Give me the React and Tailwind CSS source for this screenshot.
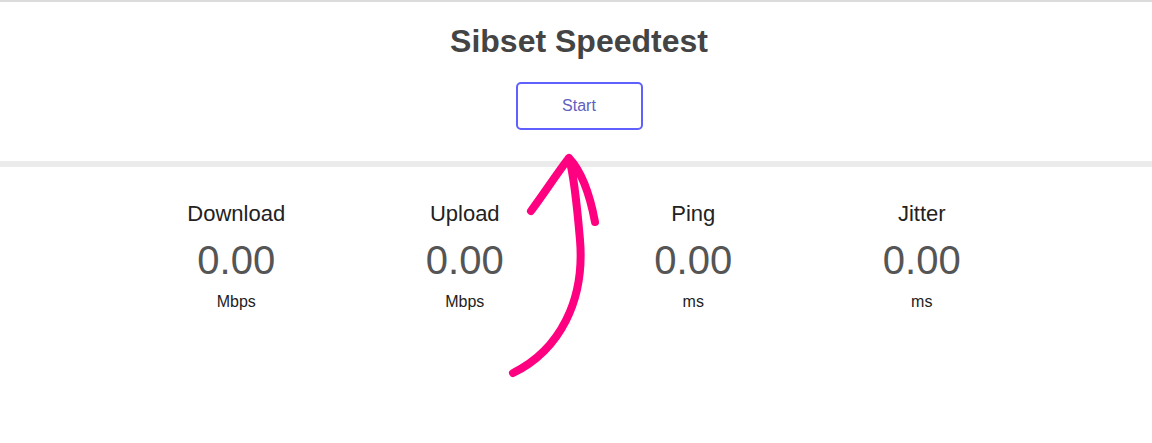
const stats = [
  { label: 'Download', value: '0.00', unit: 'Mbps' },
  { label: 'Upload', value: '0.00', unit: 'Mbps' },
  { label: 'Ping', value: '0.00', unit: 'ms' },
  { label: 'Jitter', value: '0.00', unit: 'ms' },
]

export default function App() {
  return (
    <div className="relative min-h-[443px] bg-white text-[#222] font-['Liberation_Sans',Arial,sans-serif]">
      <div className="h-[2px] bg-[#dcdcdc]" />

      <div className="flex flex-col items-center pt-[20px] pl-[6px]">
        <h1 className="text-[32px] leading-[38px] font-bold text-[#444]">Sibset Speedtest</h1>
        <button className="mt-[22px] w-[127px] h-[48px] border-2 border-[#6060ff] rounded-[5px] text-[16px] text-[#6060c0] bg-white">
          Start
        </button>
      </div>

      <div className="mt-[31px] h-[6px] bg-[#ebebeb]" />

      <div className="pl-[6px]">
        <div className="mx-auto w-[914px] grid grid-cols-4 pt-[35px]">
          {stats.map(s => (
            <div key={s.label} className="flex flex-col items-center">
              <div className="text-[22px] leading-[24px] text-[#222]">{s.label}</div>
              <div className="mt-[11px] text-[40px] leading-[46px] text-[#555]">{s.value}</div>
              <div className="mt-[10px] text-[16px] leading-[18px] text-[#222]">{s.unit}</div>
            </div>
          ))}
        </div>
      </div>

      {/* arrow pointing at the start button */}
      <svg className="absolute left-0 top-0 pointer-events-none" width="1152" height="443">
        <path d="M513 373 C560 350 585 300 580 240 C577 205 574 175 569 158 M531 211 C545 192 558 172 569 158 C582 172 590 195 595 222"
          fill="none" stroke="#ff0080" strokeWidth="8" strokeLinecap="round" strokeLinejoin="round" />
      </svg>
    </div>
  )
}
